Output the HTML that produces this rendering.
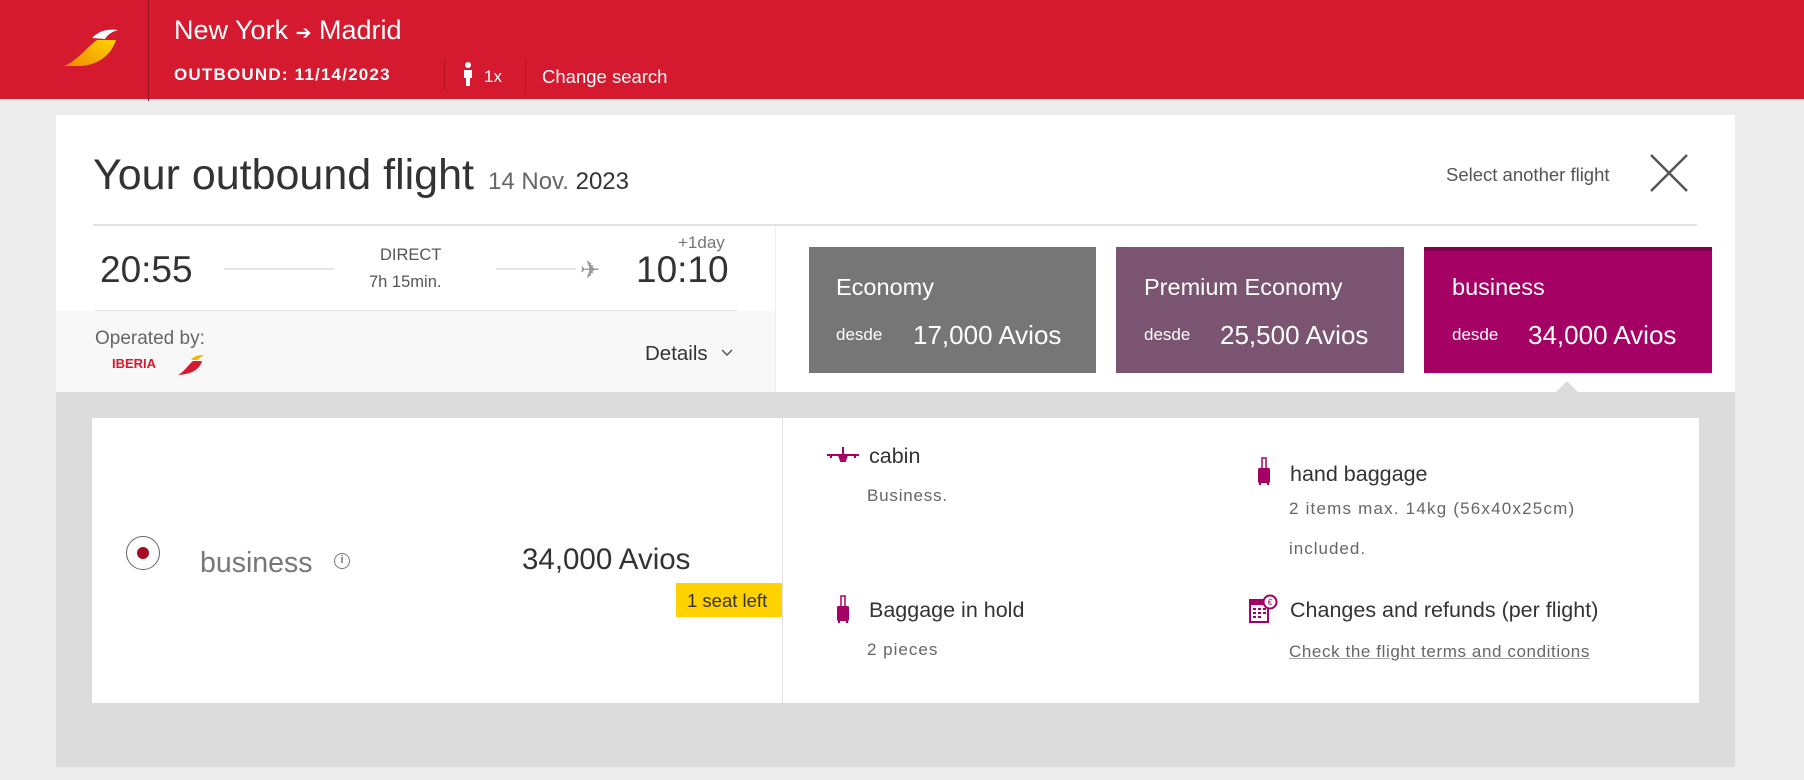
<!DOCTYPE html>
<html><head><meta charset="utf-8"><style>
*{margin:0;padding:0;box-sizing:border-box}
body{width:1804px;height:780px;background:#ececec;font-family:"Liberation Sans",sans-serif;position:relative;overflow:hidden;color:#333}
.a{position:absolute;white-space:nowrap}
</style></head><body>
<div class="a" style="left:0;top:0;width:1804px;height:99px;background:#d5192e"></div>
<div class="a" style="left:148px;top:0;width:1px;height:101px;background:#9e0f1f"></div>
<svg class="a" style="left:62px;top:28px" width="56" height="42" viewBox="0 0 56 42"><defs><linearGradient id="g" x1="0" y1="1" x2="1" y2="0"><stop offset="0" stop-color="#f08a00"/><stop offset="1" stop-color="#ffd400"/></linearGradient></defs><path d="M2 38 C14 34 26 18 35 12 L54 12 C50 24 40 36 20 38 Z" fill="url(#g)"/><path d="M30 10 C38 2 46 1 56 2 C50 4 46 6 43 11 Z" fill="#fff"/></svg>
<div class="a" style="left:174px;top:15px;font-size:27px;color:#fff">New York <span style="font-size:19px">➔</span> Madrid</div>
<div class="a" style="left:174px;top:65px;font-size:17px;font-weight:bold;color:#fff;letter-spacing:1.2px">OUTBOUND: 11/14/2023</div>
<div class="a" style="left:444px;top:60px;width:1px;height:30px;background:#b01425"></div>
<svg class="a" style="left:462px;top:62px" width="12" height="24" viewBox="0 0 12 24"><circle cx="6" cy="3" r="3" fill="#fff"/><path d="M2 8 H10 L10 16 H8 V24 H4 V16 H2 Z" fill="#fff"/></svg>
<div class="a" style="left:484px;top:67px;font-size:17px;color:#fff">1x</div>
<div class="a" style="left:525px;top:60px;width:1px;height:30px;background:#b01425"></div>
<div class="a" style="left:542px;top:66px;font-size:18.5px;color:#fff">Change search</div>

<div class="a" style="left:56px;top:115px;width:1679px;height:277px;background:#fff"></div>
<div class="a" style="left:93px;top:151px;font-size:43px;color:#333">Your outbound flight</div>
<div class="a" style="left:488px;top:168px;font-size:24px;color:#666">14 Nov. <span style="color:#333">2023</span></div>
<div class="a" style="left:1446px;top:164px;font-size:18.5px;color:#555">Select another flight</div>
<svg class="a" style="left:1649px;top:153px" width="40" height="40" viewBox="0 0 40 40"><path d="M2 2 L38 38 M38 2 L2 38" stroke="#555" stroke-width="2.5"/></svg>
<div class="a" style="left:93px;top:224px;width:1604px;height:2px;background:#e2e2e2"></div>
<div class="a" style="left:56px;top:311px;width:719px;height:81px;background:#f8f8f8"></div>
<div class="a" style="left:95px;top:310px;width:642px;height:1px;background:#e2e2e2"></div>
<div class="a" style="left:775px;top:226px;width:1px;height:166px;background:#eee"></div>
<div class="a" style="left:100px;top:249px;font-size:37px;color:#333">20:55</div>
<div class="a" style="left:224px;top:268px;width:110px;height:2px;background:#e6e6e6"></div>
<div class="a" style="left:380px;top:246px;font-size:16.5px;color:#555">DIRECT</div>
<div class="a" style="left:369px;top:273px;font-size:16.5px;color:#555">7h 15min.</div>
<div class="a" style="left:496px;top:268px;width:80px;height:2px;background:#e6e6e6"></div>
<div class="a" style="left:580px;top:256px;font-size:24px;color:#999">✈</div>
<div class="a" style="left:678px;top:233px;font-size:17px;color:#777">+1day</div>
<div class="a" style="left:636px;top:249px;font-size:37px;color:#333">10:10</div>
<div class="a" style="left:95px;top:328px;font-size:19px;color:#666">Operated by:</div>
<div class="a" style="left:112px;top:356px;font-size:13px;font-weight:bold;color:#d5192e">IBERIA</div>
<svg class="a" style="left:176px;top:354px" width="28" height="22" viewBox="0 0 28 22"><path d="M2 21 C8 18 13 10 17 7 L26 7 C24 14 18 20 2 21Z" fill="#d5192e"/><path d="M15 6 C19 1 23 1 28 1 C25 3 23 4 22 6Z" fill="#f5b800"/></svg>
<div class="a" style="left:645px;top:342px;font-size:20.5px;color:#333">Details</div>
<svg class="a" style="left:721px;top:349px" width="12" height="8" viewBox="0 0 12 8"><path d="M1 1 L6 6 L11 1" stroke="#555" stroke-width="1.5" fill="none"/></svg>

<div class="a" style="left:809px;top:247px;width:287px;height:126px;background:#767676"></div>
<div class="a" style="left:1116px;top:247px;width:288px;height:126px;background:#7a5470"></div>
<div class="a" style="left:1424px;top:247px;width:288px;height:126px;background:#a50064;border-top:4px solid #810050"></div>
<div class="a" style="left:836px;top:274px;font-size:23.5px;color:#fff">Economy</div>
<div class="a" style="left:836px;top:325px;font-size:17px;color:#fff">desde</div>
<div class="a" style="left:913px;top:320px;font-size:26px;color:#fff">17,000 Avios</div>
<div class="a" style="left:1144px;top:274px;font-size:23.5px;color:#fff">Premium Economy</div>
<div class="a" style="left:1144px;top:325px;font-size:17px;color:#fff">desde</div>
<div class="a" style="left:1220px;top:320px;font-size:26px;color:#fff">25,500 Avios</div>
<div class="a" style="left:1452px;top:274px;font-size:23.5px;color:#fff">business</div>
<div class="a" style="left:1452px;top:325px;font-size:17px;color:#fff">desde</div>
<div class="a" style="left:1528px;top:320px;font-size:26px;color:#fff">34,000 Avios</div>

<div class="a" style="left:56px;top:392px;width:1679px;height:375px;background:#dcdcdc"></div>
<div class="a" style="left:1555px;top:381px;width:0;height:0;border-left:12px solid transparent;border-right:12px solid transparent;border-bottom:12px solid #dcdcdc"></div>
<div class="a" style="left:92px;top:418px;width:1607px;height:285px;background:#fff"></div>
<div class="a" style="left:782px;top:418px;width:1px;height:285px;background:#e2e2e2"></div>
<div class="a" style="left:126px;top:536px;width:34px;height:34px;border:1.5px solid #666;border-radius:50%"></div>
<div class="a" style="left:137px;top:547px;width:12px;height:12px;border-radius:50%;background:#a50e22"></div>
<div class="a" style="left:200px;top:547px;font-size:28.5px;color:#777">business</div>
<div class="a" style="left:334px;top:553px;width:16px;height:16px;border:1.5px solid #777;border-radius:50%;font-size:11px;font-weight:bold;color:#777;text-align:center;line-height:13px">i</div>
<div class="a" style="left:522px;top:543px;font-size:29.5px;color:#333">34,000 Avios</div>
<div class="a" style="left:676px;top:583px;width:106px;height:34px;background:#ffd200;font-size:18.5px;color:#333;padding:7px 0 0 11px;overflow:hidden">1 seat left</div>

<svg class="a" style="left:827px;top:447px" width="32" height="18" viewBox="0 0 32 18"><path d="M0 8 H32 M16 0 V8 M12 8 L14 14 H18 L20 8 M4 8 V11 M28 8 V11" stroke="#a50064" stroke-width="2" fill="none"/><ellipse cx="16" cy="10" rx="4" ry="3" fill="#a50064"/></svg>
<div class="a" style="left:869px;top:444px;font-size:21.5px;color:#333">cabin</div>
<div class="a" style="left:867px;top:486px;font-size:17px;color:#666;letter-spacing:0.8px">Business.</div>
<svg class="a" style="left:1256px;top:456px" width="16" height="30" viewBox="0 0 16 30"><path d="M6 12 V2 H10 V12" stroke="#a50064" stroke-width="1.5" fill="none"/><rect x="2" y="12" width="12" height="15" rx="1.5" fill="#a50064"/><rect x="3" y="27" width="2" height="2" fill="#a50064"/><rect x="11" y="27" width="2" height="2" fill="#a50064"/></svg>
<div class="a" style="left:1290px;top:462px;font-size:21.5px;color:#333">hand baggage</div>
<div class="a" style="left:1289px;top:499px;font-size:17px;color:#666;letter-spacing:1.2px">2 items max. 14kg (56x40x25cm)</div>
<div class="a" style="left:1289px;top:539px;font-size:17px;color:#666;letter-spacing:1px">included.</div>
<svg class="a" style="left:835px;top:594px" width="16" height="30" viewBox="0 0 16 30"><path d="M6 12 V2 H10 V12" stroke="#a50064" stroke-width="1.5" fill="none"/><rect x="2" y="12" width="12" height="15" rx="1.5" fill="#a50064"/><rect x="3" y="27" width="2" height="2" fill="#a50064"/><rect x="11" y="27" width="2" height="2" fill="#a50064"/></svg>
<div class="a" style="left:869px;top:598px;font-size:21.5px;color:#333">Baggage in hold</div>
<div class="a" style="left:867px;top:640px;font-size:17px;color:#666;letter-spacing:1px">2 pieces</div>
<svg class="a" style="left:1248px;top:594px" width="30" height="30" viewBox="0 0 30 30"><rect x="2" y="6" width="18" height="22" fill="none" stroke="#a50064" stroke-width="2"/><rect x="2" y="6" width="18" height="5" fill="#a50064"/><path d="M5 15h3M10 15h3M15 15h3M5 19h3M10 19h3M15 19h3M5 23h3M10 23h3" stroke="#a50064" stroke-width="2"/><circle cx="22" cy="8" r="6.5" fill="#fff" stroke="#a50064" stroke-width="2"/><text x="22" y="11" font-size="8" text-anchor="middle" fill="#a50064" font-family="Liberation Sans">€</text></svg>
<div class="a" style="left:1290px;top:598px;font-size:21.5px;color:#333">Changes and refunds (per flight)</div>
<div class="a" style="left:1289px;top:642px;font-size:17px;color:#666;letter-spacing:0.6px;text-decoration:underline;text-decoration-color:#aaa">Check the flight terms and conditions</div>
</body></html>
